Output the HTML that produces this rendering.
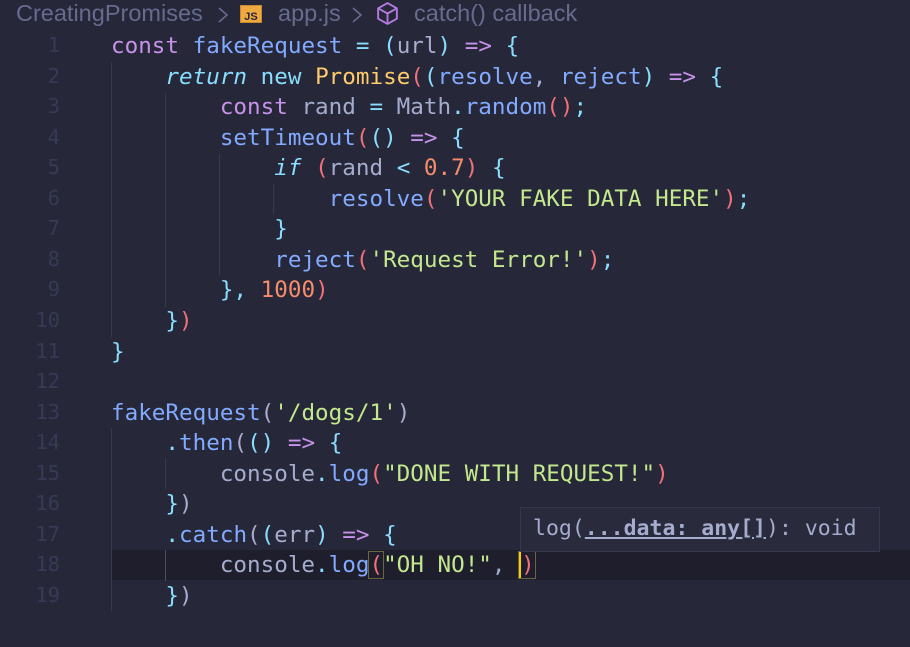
<!DOCTYPE html>
<html><head><meta charset="utf-8">
<style>
html,body{margin:0;padding:0;}
body{width:910px;height:647px;background:#262739;overflow:hidden;position:relative;font-family:"DejaVu Sans Mono","Liberation Mono",monospace;}
.bc{position:absolute;top:0;height:28px;line-height:26px;font-family:"Liberation Sans","DejaVu Sans",sans-serif;font-size:23.5px;color:#676b8e;white-space:nowrap;}
.js{position:absolute;left:240px;top:5px;width:22px;height:18px;background:#f0a840;border:1px solid #c88a30;box-sizing:border-box;color:#262739;font-family:"Liberation Sans",sans-serif;font-size:11px;font-weight:bold;line-height:22px;text-align:center;}
.chev{position:absolute;top:6px;}
.ln{position:absolute;left:0;width:60px;text-align:right;color:#363a54;font-size:20.5px;}
.l{position:absolute;left:111px;font-size:22.6px;white-space:pre;color:#a6accd;}
.cur{position:absolute;left:111px;right:0;background:#1e1e2d;}
.g{position:absolute;width:1px;background:#363950;}
.k{color:#c792ea}.f{color:#82aaff}.p{color:#89ddff}.s{color:#c3e88d}.n{color:#f78c6c}.y{color:#ffcb6b}.r{color:#f07178}.i{color:#89ddff;font-style:italic}.o{color:#c792ea}
.tip{position:absolute;left:520px;top:507px;width:360px;height:45px;background:#292a3c;border:1px solid #363850;box-sizing:border-box;color:#a6accd;font-size:21.5px;line-height:42px;padding-left:12px;white-space:pre;}
.tip b{text-decoration:underline;}
.bx{outline:1px solid #6b6540;}
</style></head><body>
<div class="bc" style="left:16px">CreatingPromises</div>
<svg class="chev" style="left:216px" width="14" height="18" viewBox="0 0 14 18"><path d="M3 2 L11 9 L3 16" fill="none" stroke="#676b8e" stroke-width="1.6"/></svg>
<div class="js">JS</div>
<div class="bc" style="left:278px">app.js</div>
<svg class="chev" style="left:350px" width="14" height="18" viewBox="0 0 14 18"><path d="M3 2 L11 9 L3 16" fill="none" stroke="#676b8e" stroke-width="1.6"/></svg>
<svg style="position:absolute;left:375px;top:1px" width="25" height="25" viewBox="0 0 24 24"><path d="M12 2 L21 7 L21 17 L12 22 L3 17 L3 7 Z M3 7 L12 12 L21 7 M12 12 L12 22" fill="none" stroke="#b57ae0" stroke-width="1.8" stroke-linejoin="round"/></svg>
<div class="bc" style="left:414px">catch() callback</div>

<div class="cur" style="top:550px;height:30px"></div>

<div class="g" style="left:111px;top:62px;height:275px"></div>
<div class="g" style="left:165px;top:93px;height:214px"></div>
<div class="g" style="left:219px;top:154px;height:122px"></div>
<div class="g" style="left:273px;top:184px;height:31px"></div>
<div class="g" style="left:111px;top:428px;height:183px"></div>
<div class="g" style="left:165px;top:458px;height:31px"></div>
<div class="g" style="left:165px;top:550px;height:31px;background:#4a4d68"></div>

<div class="ln" style="top:33px">1</div><div class="ln" style="top:64px">2</div><div class="ln" style="top:94px">3</div><div class="ln" style="top:125px">4</div><div class="ln" style="top:155px">5</div><div class="ln" style="top:186px">6</div><div class="ln" style="top:216px">7</div><div class="ln" style="top:247px">8</div><div class="ln" style="top:277px">9</div><div class="ln" style="top:308px">10</div><div class="ln" style="top:339px">11</div><div class="ln" style="top:369px">12</div><div class="ln" style="top:400px">13</div><div class="ln" style="top:430px">14</div><div class="ln" style="top:461px">15</div><div class="ln" style="top:491px">16</div><div class="ln" style="top:522px">17</div><div class="ln" style="top:552px">18</div><div class="ln" style="top:583px">19</div>

<div class="l" style="top:33px"><span class="k">const</span> <span class="f">fakeRequest</span> <span class="p">=</span> <span class="p">(</span>url<span class="p">)</span> <span class="o">=&gt;</span> <span class="p">{</span></div>
<div class="l" style="top:64px">    <span class="i">return</span> <span class="p">new</span> <span class="y">Promise</span><span class="r">(</span><span class="p">(</span><span class="f">resolve</span>, <span class="f">reject</span><span class="p">)</span> <span class="o">=&gt;</span> <span class="p">{</span></div>
<div class="l" style="top:94px">        <span class="k">const</span> rand <span class="p">=</span> Math<span class="p">.</span><span class="f">random</span><span class="r">()</span><span class="p">;</span></div>
<div class="l" style="top:125px">        <span class="f">setTimeout</span><span class="r">(</span><span class="p">()</span> <span class="o">=&gt;</span> <span class="p">{</span></div>
<div class="l" style="top:155px">            <span class="i">if</span> <span class="r">(</span>rand <span class="p">&lt;</span> <span class="n">0.7</span><span class="r">)</span> <span class="p">{</span></div>
<div class="l" style="top:186px">                <span class="f">resolve</span><span class="r">(</span><span class="s">'YOUR FAKE DATA HERE'</span><span class="r">)</span><span class="p">;</span></div>
<div class="l" style="top:216px">            <span class="p">}</span></div>
<div class="l" style="top:247px">            <span class="f">reject</span><span class="r">(</span><span class="s">'Request Error!'</span><span class="r">)</span><span class="p">;</span></div>
<div class="l" style="top:277px">        <span class="p">},</span> <span class="n">1000</span><span class="r">)</span></div>
<div class="l" style="top:308px">    <span class="p">}</span><span class="r">)</span></div>
<div class="l" style="top:339px"><span class="p">}</span></div>
<div class="l" style="top:400px"><span class="f">fakeRequest</span>(<span class="s">'/dogs/1'</span>)</div>
<div class="l" style="top:430px">    <span class="p">.</span><span class="f">then</span>(<span class="p">()</span> <span class="o">=&gt;</span> <span class="p">{</span></div>
<div class="l" style="top:461px">        console<span class="p">.</span><span class="f">log</span><span class="r">(</span><span class="s">"DONE WITH REQUEST!"</span><span class="r">)</span></div>
<div class="l" style="top:491px">    <span class="p">}</span>)</div>
<div class="l" style="top:522px">    <span class="p">.</span><span class="f">catch</span>(<span class="p">(</span>err<span class="p">)</span> <span class="o">=&gt;</span> <span class="p">{</span></div>
<div class="l" style="top:552px">        console<span class="p">.</span><span class="f">log</span><span class="r bx">(</span><span class="s">"OH NO!"</span>, <span class="r bx" style="border-left:2px solid #ffcc00">)</span></div>
<div class="l" style="top:583px">    <span class="p">}</span>)</div>

<div class="tip">log(<b>...data: any[]</b>): void</div>
</body></html>
